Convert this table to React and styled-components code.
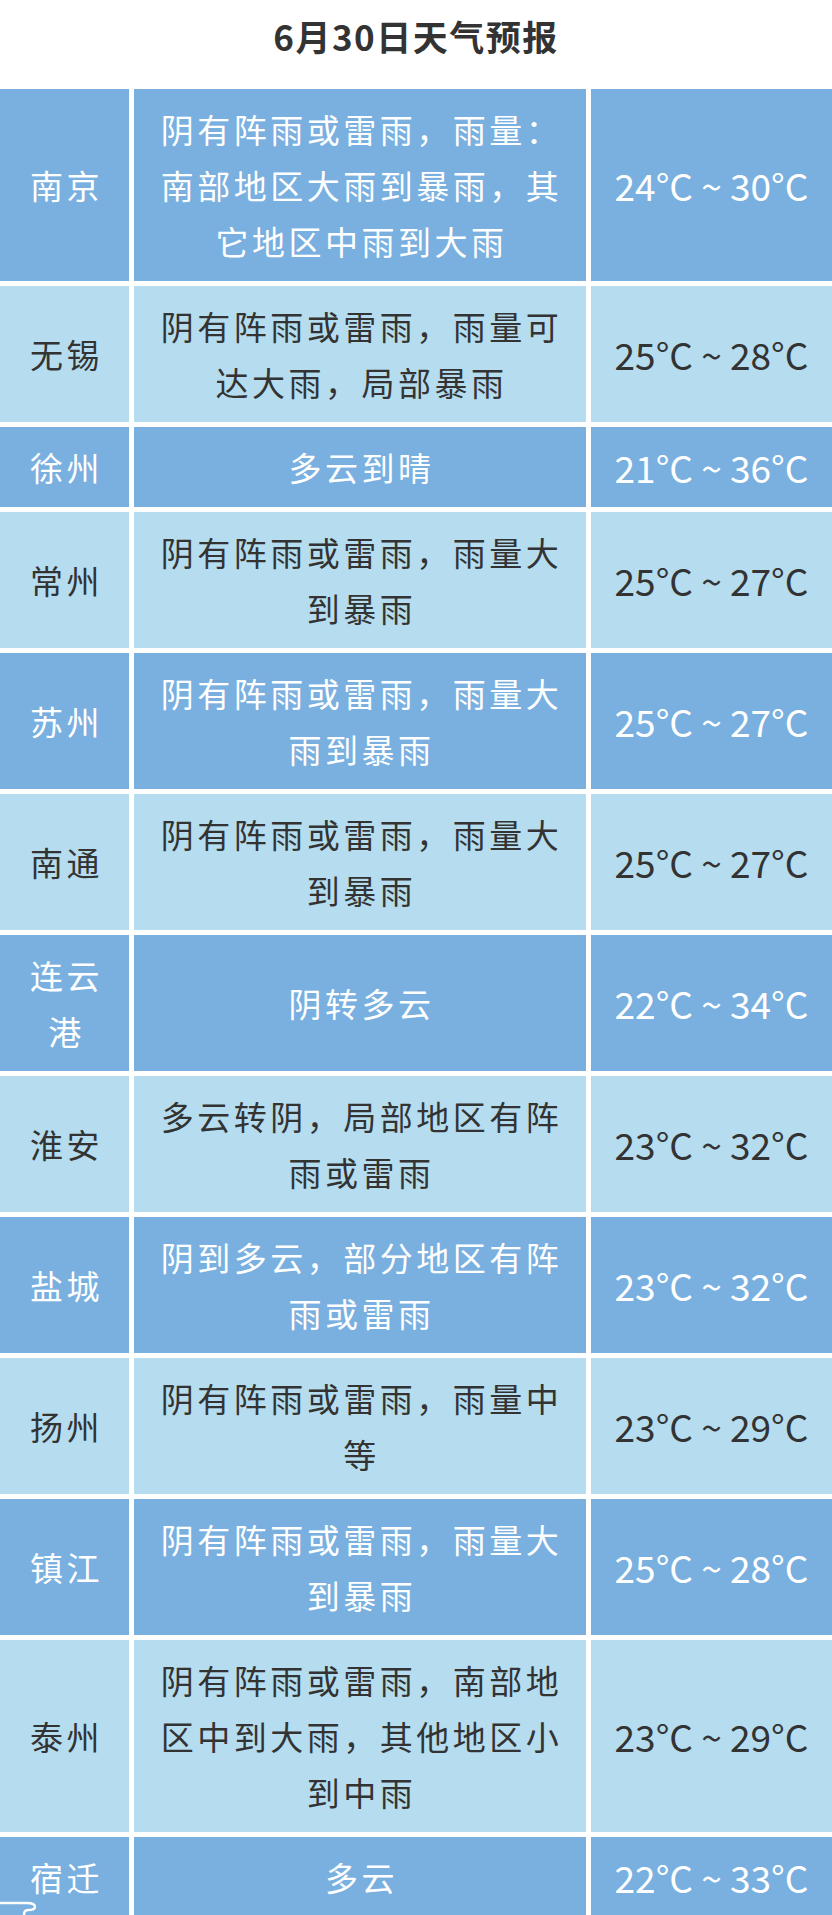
import React from 'react'
import styled, { createGlobalStyle } from 'styled-components'

const GlobalStyle = createGlobalStyle`
  html, body {
    margin: 0;
    padding: 0;
    background: #ffffff;
  }
  body {
    font-family: "Noto Sans CJK SC", "Noto Sans", sans-serif;
  }
`;

const Page = styled.div`
  position: relative;
  width: 832px;
  background: #ffffff;
`;

const Title = styled.h1`
  margin: 0;
  height: 89px;
  padding-top: 12px;
  box-sizing: border-box;
  text-align: center;
  font-size: 35px;
  line-height: 48px;
  font-weight: 700;
  letter-spacing: 1.5px;
  color: #333333;
`;

const Table = styled.div`
  display: flex;
  flex-direction: column;
  gap: 5px;
`;

const Row = styled.div`
  display: grid;
  grid-template-columns: 129px 452px 1fr;
  column-gap: 5px;
  background: #ffffff;
  color: ${({ dark }) => (dark ? '#ffffff' : '#333333')};
`;

const Cell = styled.div`
  display: flex;
  align-items: center;
  justify-content: center;
  text-align: center;
  padding: 12px 0;
  background: ${({ dark }) => (dark ? '#79b0df' : '#b5ddef')};
  font-size: 33px;
  line-height: 56px;
  letter-spacing: 3.5px;
  white-space: pre-line;
`;

const City = styled(Cell)`
  padding-left: 4px;
`;

const Desc = styled(Cell)`
  padding-left: 3px;
`;

const Temp = styled(Cell)`
  font-size: 37px;
  letter-spacing: 0;
`;

const Corner = styled.svg`
  position: absolute;
  left: 0;
  top: 1899px;
  width: 40px;
  height: 16px;
`;

const rows = [
  { city: '南京', desc: '阴有阵雨或雷雨，雨量：\n南部地区大雨到暴雨，其\n它地区中雨到大雨', temp: '24°C ~ 30°C' },
  { city: '无锡', desc: '阴有阵雨或雷雨，雨量可\n达大雨，局部暴雨', temp: '25°C ~ 28°C' },
  { city: '徐州', desc: '多云到晴', temp: '21°C ~ 36°C' },
  { city: '常州', desc: '阴有阵雨或雷雨，雨量大\n到暴雨', temp: '25°C ~ 27°C' },
  { city: '苏州', desc: '阴有阵雨或雷雨，雨量大\n雨到暴雨', temp: '25°C ~ 27°C' },
  { city: '南通', desc: '阴有阵雨或雷雨，雨量大\n到暴雨', temp: '25°C ~ 27°C' },
  { city: '连云\n港', desc: '阴转多云', temp: '22°C ~ 34°C' },
  { city: '淮安', desc: '多云转阴，局部地区有阵\n雨或雷雨', temp: '23°C ~ 32°C' },
  { city: '盐城', desc: '阴到多云，部分地区有阵\n雨或雷雨', temp: '23°C ~ 32°C' },
  { city: '扬州', desc: '阴有阵雨或雷雨，雨量中\n等', temp: '23°C ~ 29°C' },
  { city: '镇江', desc: '阴有阵雨或雷雨，雨量大\n到暴雨', temp: '25°C ~ 28°C' },
  { city: '泰州', desc: '阴有阵雨或雷雨，南部地\n区中到大雨，其他地区小\n到中雨', temp: '23°C ~ 29°C' },
  { city: '宿迁', desc: '多云', temp: '22°C ~ 33°C' },
];

export default function App() {
  return (
    <Page>
      <GlobalStyle />
      <Title>6月30日天气预报</Title>
      <Table>
        {rows.map((r, i) => {
          const dark = i % 2 === 0;
          return (
            <Row key={i} dark={dark}>
              <City dark={dark}>{r.city}</City>
              <Desc dark={dark}>{r.desc}</Desc>
              <Temp dark={dark}>{r.temp}</Temp>
            </Row>
          );
        })}
      </Table>
      <Corner viewBox="0 0 40 16">
        <path d="M0 4 H27 Q35 4 35 8 Q35 11 28 11 Q24 11 24 16" fill="none" stroke="#ffffff" strokeWidth="2.5" />
      </Corner>
    </Page>
  );
}
